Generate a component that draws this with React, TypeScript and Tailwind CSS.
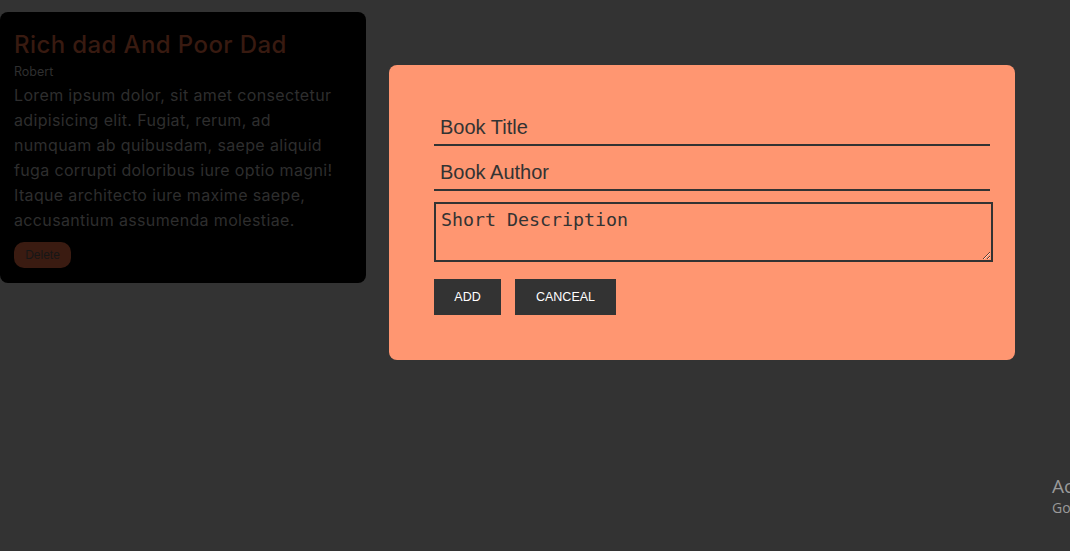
import React from "react";

const lines = [
  "Lorem ipsum dolor, sit amet consectetur",
  "adipisicing elit. Fugiat, rerum, ad",
  "numquam ab quibusdam, saepe aliquid",
  "fuga corrupti doloribus iure optio magni!",
  "Itaque architecto iure maxime saepe,",
  "accusantium assumenda molestiae.",
];

export default function App() {
  return (
    <div className="relative w-[1070px] h-[551px] overflow-hidden bg-[#333333]">
      <div className="pt-3">
        <div className="w-[366px] h-[271px] rounded-lg bg-black px-[14px] pt-[19px]">
          <h2 className="font-['Inter',sans-serif] font-medium text-[24px] leading-[28px] text-[#381a10] tracking-[0.4px] whitespace-nowrap">
            Rich dad And Poor Dad
          </h2>
          <p className="mt-[6px] font-['Inter',sans-serif] text-[12.5px] leading-[14px] text-[#2f2f2f]">Robert</p>
          <p className="mt-[4px] font-['Inter',sans-serif] text-[16px] leading-[25px] tracking-[0.35px] text-[#2e2e2e] whitespace-nowrap">
            {lines.map((l) => (
              <span key={l} className="block">
                {l}
              </span>
            ))}
          </p>
          <button className="mt-[9px] h-[26px] w-[57px] rounded-[10px] bg-[#3a1b11] font-['Liberation_Sans',sans-serif] text-[12px] text-[#161616]">
            Delete
          </button>
        </div>
      </div>

      <div className="absolute left-[389px] top-[65px] w-[626px] h-[295px] rounded-lg bg-[#ff9671] pl-[45px] pt-[46px]">
        <input
          placeholder="Book Title"
          className="block w-[556px] h-[35px] bg-transparent border-b-2 border-[#333333] px-[6px] font-['Liberation_Sans',sans-serif] text-[20px] text-[#333333] placeholder:text-[#333333] outline-none"
        />
        <input
          placeholder="Book Author"
          className="mt-[10px] block w-[556px] h-[35px] bg-transparent border-b-2 border-[#333333] px-[6px] font-['Liberation_Sans',sans-serif] text-[20px] text-[#333333] placeholder:text-[#333333] outline-none"
        />
        <textarea
          placeholder="Short Description"
          className="mt-[11px] block w-[559px] h-[60px] bg-transparent border-2 border-[#333333] px-[5px] pt-[4px] font-['DejaVu_Sans_Mono',monospace] text-[18.3px] leading-[24px] text-[#333333] placeholder:text-[#333333] outline-none"
        />
        <div className="mt-[17px] flex gap-[14px]">
          <button className="h-[36px] w-[67px] bg-[#333333] font-['Liberation_Sans',sans-serif] text-[12.5px] text-white">
            ADD
          </button>
          <button className="h-[36px] w-[101px] bg-[#333333] font-['Liberation_Sans',sans-serif] text-[12.5px] text-white">
            CANCEAL
          </button>
        </div>
      </div>

      <div className="absolute left-[1052px] top-[474px] font-['Open_Sans',sans-serif] text-[#9a9a9a] whitespace-nowrap">
        <div className="text-[19px] leading-[24px]">Activate Windows</div>
        <div className="text-[14px] leading-[20px]">Go to Settings to activate Windows.</div>
      </div>
    </div>
  );
}
